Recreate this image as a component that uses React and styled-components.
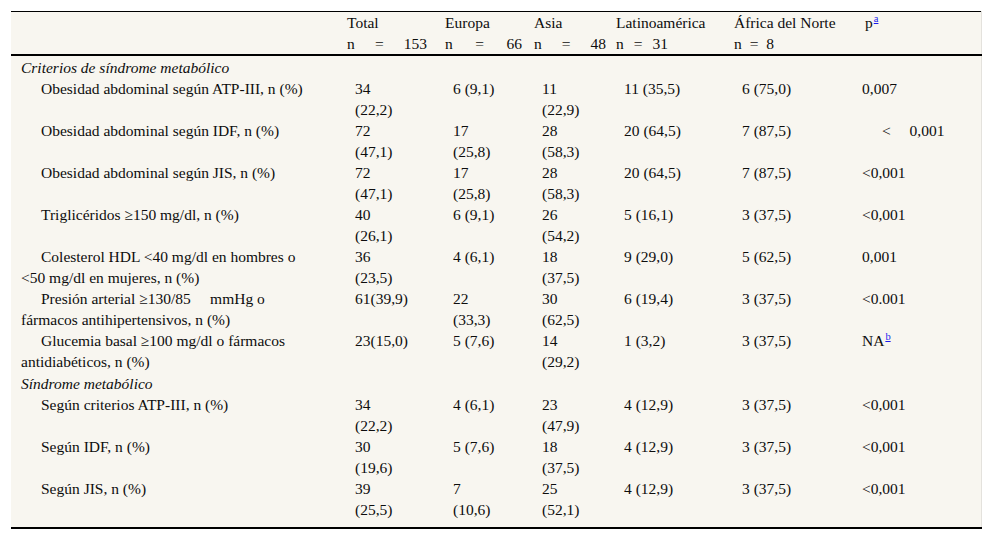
import React from 'react';
import styled, { createGlobalStyle } from 'styled-components';

const GlobalStyle = createGlobalStyle`
  body {
    margin: 0;
    background: #ffffff;
    font-family: "Liberation Serif", "Times New Roman", serif;
    color: #0d0d0d;
  }
`;

const Page = styled.div`
  padding: 11px;
`;

const Table = styled.table`
  width: 970px;
  table-layout: fixed;
  border-collapse: collapse;
  background: #f8f6f0;
  border-top: 1px solid #000;
  border-bottom: 2px solid #000;
  border-right: 1px solid #e4e2dd;
  font-size: 15.5px;
  line-height: 21px;
`;

const Head = styled.thead`
  th {
    border-bottom: 2px solid #000;
  }
`;

const HeadCell = styled.th`
  text-align: left;
  font-weight: normal;
  vertical-align: top;
  padding: 0 0 0 ${(p) => p.$pl || 0}px;
  white-space: nowrap;
`;

const NLine = styled.span`
  display: flex;
  justify-content: space-between;
  width: ${(p) => p.$w}px;
`;

const Sup = styled.a`
  font-size: 10.5px;
  vertical-align: super;
  line-height: 0;
  color: #1a1aee;
  text-decoration: underline;
  margin-left: 1px;
`;

const Body = styled.tbody`
  tr:last-child td {
    padding-bottom: 7px;
  }
`;

const SectionCell = styled.td`
  font-style: italic;
  padding: 1px 0 0 10px;
  white-space: nowrap;
`;

const LabelCell = styled.td`
  vertical-align: top;
  padding: 0 26px 0 10px;
  text-indent: 20px;
`;

const ValueCell = styled.td`
  vertical-align: top;
  padding: 0 ${(p) => p.$pr || 10}px 0 ${(p) => p.$pl || 8}px;
`;

const Spread = styled.span`
  display: inline-block;
  padding-left: 20px;
  word-spacing: 15px;
`;

const cols = [
  { name: 'Total', n: '153', w: 80, pr: 40 },
  { name: 'Europa', n: '66', w: 77, pr: 36 },
  { name: 'Asia', n: '48', w: 72, pr: 29 },
  { name: 'Latinoamérica', n: '31', w: 52 },
  { name: 'África del Norte', n: '8', w: 40 },
];

const rows = [
  { section: 'Criterios de síndrome metabólico' },
  { label: 'Obesidad abdominal según ATP-III, n (%)', v: ['34 (22,2)', '6 (9,1)', '11 (22,9)', '11 (35,5)', '6 (75,0)'], p: '0,007' },
  { label: 'Obesidad abdominal según IDF, n (%)', v: ['72 (47,1)', '17 (25,8)', '28 (58,3)', '20 (64,5)', '7 (87,5)'], p: '< 0,001', spread: true },
  { label: 'Obesidad abdominal según JIS, n (%)', v: ['72 (47,1)', '17 (25,8)', '28 (58,3)', '20 (64,5)', '7 (87,5)'], p: '<0,001' },
  { label: 'Triglicéridos ≥150 mg/dl, n (%)', v: ['40 (26,1)', '6 (9,1)', '26 (54,2)', '5 (16,1)', '3 (37,5)'], p: '<0,001' },
  { label: 'Colesterol HDL <40 mg/dl en hombres o <50 mg/dl en mujeres, n (%)', v: ['36 (23,5)', '4 (6,1)', '18 (37,5)', '9 (29,0)', '5 (62,5)'], p: '0,001' },
  { label: 'Presión arterial ≥130/85\u00a0\u00a0\u00a0\u00a0 mmHg o fármacos antihipertensivos, n (%)', v: ['61(39,9)', '22 (33,3)', '30 (62,5)', '6 (19,4)', '3 (37,5)'], p: '<0.001' },
  { label: 'Glucemia basal ≥100 mg/dl o fármacos antidiabéticos, n (%)', v: ['23(15,0)', '5 (7,6)', '14 (29,2)', '1 (3,2)', '3 (37,5)'], p: 'NA', note: 'b' },
  { section: 'Síndrome metabólico' },
  { label: 'Según criterios ATP-III, n (%)', v: ['34 (22,2)', '4 (6,1)', '23 (47,9)', '4 (12,9)', '3 (37,5)'], p: '<0,001' },
  { label: 'Según IDF, n (%)', v: ['30 (19,6)', '5 (7,6)', '18 (37,5)', '4 (12,9)', '3 (37,5)'], p: '<0,001' },
  { label: 'Según JIS, n (%)', v: ['39 (25,5)', '7 (10,6)', '25 (52,1)', '4 (12,9)', '3 (37,5)'], p: '<0,001' },
];

export default function App() {
  return (
    <Page>
      <GlobalStyle />
      <Table>
        <colgroup>
          <col style={{ width: 336 }} />
          <col style={{ width: 98 }} />
          <col style={{ width: 89 }} />
          <col style={{ width: 82 }} />
          <col style={{ width: 118 }} />
          <col style={{ width: 118 }} />
          <col style={{ width: 129 }} />
        </colgroup>
        <Head>
          <tr>
            <HeadCell />
            {cols.map((c) => (
              <HeadCell key={c.name}>
                <div>{c.name}</div>
                <NLine $w={c.w}>
                  <span>n</span>
                  <span>=</span>
                  <span>{c.n}</span>
                </NLine>
              </HeadCell>
            ))}
            <HeadCell $pl={13}>
              p<Sup href="#">a</Sup>
            </HeadCell>
          </tr>
        </Head>
        <Body>
          {rows.map((r, i) =>
            r.section ? (
              <tr key={i}>
                <SectionCell colSpan={7}>{r.section}</SectionCell>
              </tr>
            ) : (
              <tr key={i}>
                <LabelCell>{r.label}</LabelCell>
                {r.v.map((v, j) => (
                  <ValueCell key={j} $pr={cols[j].pr}>
                    {v}
                  </ValueCell>
                ))}
                <ValueCell $pl={10}>
                  {r.spread ? <Spread>{r.p}</Spread> : r.p}
                  {r.note && <Sup href="#">{r.note}</Sup>}
                </ValueCell>
              </tr>
            )
          )}
        </Body>
      </Table>
    </Page>
  );
}
